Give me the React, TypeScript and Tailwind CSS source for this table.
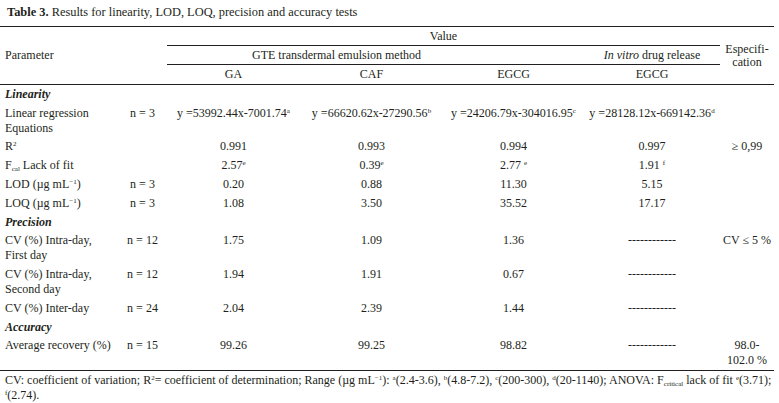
import type { ReactNode } from "react";

const cols = "grid grid-cols-[118px_49px_133px_143px_141px_136px_54px]";

function Sup({ children }: { children: ReactNode }) {
  return <sup className="relative -top-[4px] text-[7px]">{children}</sup>;
}

function Sub({ children }: { children: ReactNode }) {
  return <sub className="relative -bottom-[2px] text-[7px]">{children}</sub>;
}

interface RowProps {
  param: ReactNode;
  n?: string;
  ga?: ReactNode;
  caf?: ReactNode;
  egcg?: ReactNode;
  vitro?: ReactNode;
  spec?: ReactNode;
}

function Row({ param, n, ga, caf, egcg, vitro, spec }: RowProps) {
  return (
    <div className={`${cols} py-[1.9px]`}>
      <div className="pl-[5px] whitespace-nowrap">{param}</div>
      <div className="text-center whitespace-nowrap">{n}</div>
      <div className="text-center whitespace-nowrap">{ga}</div>
      <div className="text-center whitespace-nowrap">{caf}</div>
      <div className="text-center whitespace-nowrap">{egcg}</div>
      <div className="text-center whitespace-nowrap">{vitro}</div>
      <div className="text-center whitespace-nowrap">{spec}</div>
    </div>
  );
}

function Section({ title }: { title: string }) {
  return <div className="py-[1.9px] pl-[5px] font-bold italic">{title}</div>;
}

const dashes = "------------";
const ugml = (
  <>
    (µg mL<Sup>−1</Sup>)
  </>
);

export default function App() {
  return (
    <div className="h-[403px] w-[779px] overflow-hidden bg-white font-['Liberation_Serif'] text-[12px] leading-[15px] text-[#231f20]">
      <p className="h-[26px] pl-[7px] pt-[5px] text-[12.4px]">
        <b>Table 3.</b> Results for linearity, LOD, LOQ, precision and accuracy tests
      </p>

      <div className={`${cols} w-[774px] grid-rows-[19px_19px_19px] border-y border-[#231f20]`}>
        <div className="col-span-2 row-span-3 flex items-center pl-[5px]">Parameter</div>
        <div className="col-span-4 flex items-center justify-center border-b border-[#231f20]">Value</div>
        <div className="row-span-3 flex items-center justify-center">
          <div className="text-center leading-[13px]">
            Especifi-
            <br />
            cation
          </div>
        </div>
        <div className="col-span-3 flex items-center justify-center border-b border-[#231f20] pr-[78px]">
          GTE transdermal emulsion method
        </div>
        <div className="flex items-center justify-center border-b border-[#231f20]">
          <span>
            <i>In vitro</i> drug release
          </span>
        </div>
        <div className="flex items-center justify-center">GA</div>
        <div className="flex items-center justify-center">CAF</div>
        <div className="flex items-center justify-center">EGCG</div>
        <div className="flex items-center justify-center">EGCG</div>
      </div>

      <div className="w-[774px] border-b border-[#231f20]">
        <Section title="Linearity" />
        <Row
          param={
            <>
              Linear regression
              <br />
              Equations
            </>
          }
          n="n = 3"
          ga={
            <>
              y =53992.44x-7001.74<Sup>a</Sup>
            </>
          }
          caf={
            <>
              y =66620.62x-27290.56<Sup>b</Sup>
            </>
          }
          egcg={
            <>
              y =24206.79x-304016.95<Sup>c</Sup>
            </>
          }
          vitro={
            <>
              y =28128.12x-669142.36<Sup>d</Sup>
            </>
          }
        />
        <Row
          param={
            <>
              R<Sup>2</Sup>
            </>
          }
          ga="0.991"
          caf="0.993"
          egcg="0.994"
          vitro="0.997"
          spec="≥ 0,99"
        />
        <Row
          param={
            <>
              F<Sub>cal</Sub> Lack of fit
            </>
          }
          ga={
            <>
              2.57<Sup>e</Sup>
            </>
          }
          caf={
            <>
              0.39<Sup>e</Sup>
            </>
          }
          egcg={
            <>
              2.77 <Sup>e</Sup>
            </>
          }
          vitro={
            <>
              1.91 <Sup>f</Sup>
            </>
          }
        />
        <Row param={<>LOD {ugml}</>} n="n = 3" ga="0.20" caf="0.88" egcg="11.30" vitro="5.15" />
        <Row param={<>LOQ {ugml}</>} n="n = 3" ga="1.08" caf="3.50" egcg="35.52" vitro="17.17" />

        <Section title="Precision" />
        <Row
          param={
            <>
              CV (%) Intra-day,
              <br />
              First day
            </>
          }
          n="n = 12"
          ga="1.75"
          caf="1.09"
          egcg="1.36"
          vitro={dashes}
          spec="CV ≤ 5 %"
        />
        <Row
          param={
            <>
              CV (%) Intra-day,
              <br />
              Second day
            </>
          }
          n="n = 12"
          ga="1.94"
          caf="1.91"
          egcg="0.67"
          vitro={dashes}
        />
        <Row param="CV (%) Inter-day" n="n = 24" ga="2.04" caf="2.39" egcg="1.44" vitro={dashes} />

        <Section title="Accuracy" />
        <Row
          param="Average recovery (%)"
          n="n = 15"
          ga="99.26"
          caf="99.25"
          egcg="98.82"
          vitro={dashes}
          spec={
            <>
              98.0-
              <br />
              102.0 %
            </>
          }
        />
      </div>

      <p className="pl-[5px] pt-[2px]">
        <span className="whitespace-nowrap">
          CV: coefficient of variation; R<Sup>2</Sup>= coefficient of determination; Range {ugml}: <Sup>a</Sup>(2.4-3.6),{" "}
          <Sup>b</Sup>(4.8-7.2), <Sup>c</Sup>(200-300), <Sup>d</Sup>(20-1140); ANOVA: F<Sub>critical</Sub> lack of fit{" "}
          <Sup>e</Sup>(3.71);
        </span>
        <br />
        <Sup>f</Sup>(2.74).
      </p>
    </div>
  );
}
